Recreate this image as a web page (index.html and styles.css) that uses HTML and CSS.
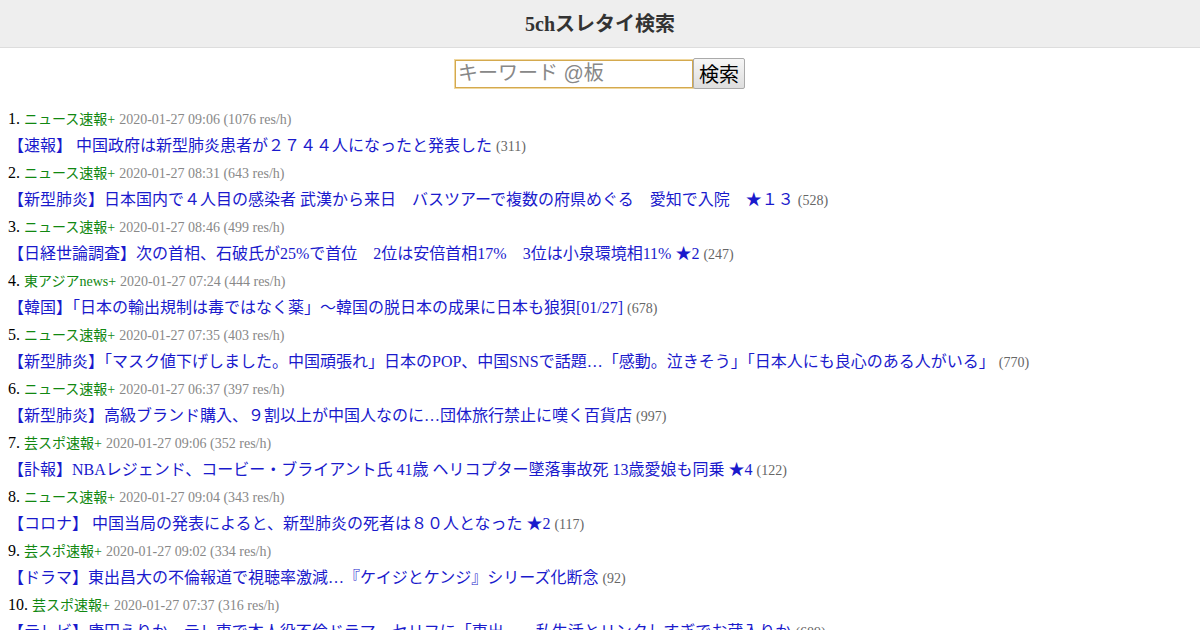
FILE: index.html
```html
<!DOCTYPE html>
<html lang="ja">
<head>
<meta charset="utf-8">
<title>5chスレタイ検索</title>
<link rel="stylesheet" href="styles.css">
</head>
<body>
<header class="header"><h1 class="site-title">5chスレタイ検索</h1></header>
<form class="search">
  <input class="search-input" type="text" placeholder="キーワード @板"><button class="search-btn" type="button">検索</button>
</form>
<div class="list">
  <div class="item">
    <div class="meta"><span class="num">1.</span> <span class="board">ニュース速報+</span> <span class="info">2020-01-27 09:06 (1076 res/h)</span></div>
    <div class="row"><a class="link" href="#">【速報】 中国政府は新型肺炎患者が２７４４人になったと発表した</a> <span class="count">(311)</span></div>
  </div>
  <div class="item">
    <div class="meta"><span class="num">2.</span> <span class="board">ニュース速報+</span> <span class="info">2020-01-27 08:31 (643 res/h)</span></div>
    <div class="row"><a class="link" href="#">【新型肺炎】日本国内で４人目の感染者 武漢から来日　バスツアーで複数の府県めぐる　愛知で入院　★１３</a> <span class="count">(528)</span></div>
  </div>
  <div class="item">
    <div class="meta"><span class="num">3.</span> <span class="board">ニュース速報+</span> <span class="info">2020-01-27 08:46 (499 res/h)</span></div>
    <div class="row"><a class="link" href="#">【日経世論調査】次の首相、石破氏が25%で首位　2位は安倍首相17%　3位は小泉環境相11% ★2</a> <span class="count">(247)</span></div>
  </div>
  <div class="item">
    <div class="meta"><span class="num">4.</span> <span class="board">東アジアnews+</span> <span class="info">2020-01-27 07:24 (444 res/h)</span></div>
    <div class="row"><a class="link" href="#">【韓国】「日本の輸出規制は毒ではなく薬」～韓国の脱日本の成果に日本も狼狽[01/27]</a> <span class="count">(678)</span></div>
  </div>
  <div class="item">
    <div class="meta"><span class="num">5.</span> <span class="board">ニュース速報+</span> <span class="info">2020-01-27 07:35 (403 res/h)</span></div>
    <div class="row"><a class="link" href="#">【新型肺炎】「マスク値下げしました。中国頑張れ」日本のPOP、中国SNSで話題…「感動。泣きそう」「日本人にも良心のある人がいる」</a> <span class="count">(770)</span></div>
  </div>
  <div class="item">
    <div class="meta"><span class="num">6.</span> <span class="board">ニュース速報+</span> <span class="info">2020-01-27 06:37 (397 res/h)</span></div>
    <div class="row"><a class="link" href="#">【新型肺炎】高級ブランド購入、９割以上が中国人なのに…団体旅行禁止に嘆く百貨店</a> <span class="count">(997)</span></div>
  </div>
  <div class="item">
    <div class="meta"><span class="num">7.</span> <span class="board">芸スポ速報+</span> <span class="info">2020-01-27 09:06 (352 res/h)</span></div>
    <div class="row"><a class="link" href="#">【訃報】NBAレジェンド、コービー・ブライアント氏 41歳 ヘリコプター墜落事故死 13歳愛娘も同乗 ★4</a> <span class="count">(122)</span></div>
  </div>
  <div class="item">
    <div class="meta"><span class="num">8.</span> <span class="board">ニュース速報+</span> <span class="info">2020-01-27 09:04 (343 res/h)</span></div>
    <div class="row"><a class="link" href="#">【コロナ】 中国当局の発表によると、新型肺炎の死者は８０人となった ★2</a> <span class="count">(117)</span></div>
  </div>
  <div class="item">
    <div class="meta"><span class="num">9.</span> <span class="board">芸スポ速報+</span> <span class="info">2020-01-27 09:02 (334 res/h)</span></div>
    <div class="row"><a class="link" href="#">【ドラマ】東出昌大の不倫報道で視聴率激減…『ケイジとケンジ』シリーズ化断念</a> <span class="count">(92)</span></div>
  </div>
  <div class="item">
    <div class="meta"><span class="num">10.</span> <span class="board">芸スポ速報+</span> <span class="info">2020-01-27 07:37 (316 res/h)</span></div>
    <div class="row"><a class="link" href="#">【テレビ】唐田えりか、テレ東で本人役不倫ドラマ…セリフに「東出……私生活とリンクしすぎでお蔵入りか</a> <span class="count">(689)</span></div>
  </div>
</div>
</body>
</html>
```

FILE: styles.css
```css
html, body {
  margin: 0;
  padding: 0;
  background: #fff;
}
body {
  font-family: "Liberation Serif", "Noto Sans CJK JP", serif;
  color: #000;
}
.header {
  height: 47px;
  background: #eeeeee;
  border-bottom: 1px solid #dddddd;
  display: flex;
  align-items: center;
  justify-content: center;
}
.site-title {
  margin: 0;
  font-size: 20px;
  font-weight: bold;
  color: #333;
  line-height: 1;
}
.search {
  display: flex;
  justify-content: center;
  align-items: center;
  margin-top: 10px;
  height: 31px;
}
.search-input {
  box-sizing: border-box;
  width: 238px;
  height: 28px;
  font-size: 20px;
  font-family: "Liberation Sans", "Noto Sans CJK JP", sans-serif;
  border: 1px solid #d4a94e;
  outline: 1px solid #f0d8a0;
  padding: 0 2px;
  margin: 0;
  color: #000;
}
.search-input::placeholder {
  color: #888;
}
.search-btn {
  box-sizing: border-box;
  height: 31px;
  width: 52px;
  font-size: 20px;
  font-family: "Noto Sans CJK JP", sans-serif;
  border: 1px solid #aaa;
  border-radius: 2px;
  background: linear-gradient(#f6f6f6, #dedede);
  padding: 0;
  margin: 0;
  color: #000;
  line-height: 1;
}
.list {
  margin-top: 16px;
  padding: 0 8px;
}
.meta, .row {
  height: 27px;
  line-height: 27px;
  white-space: nowrap;
}
.num {
  font-size: 16px;
}
.board {
  font-size: 14px;
  color: #118811;
}
.info, .count {
  font-size: 14px;
  color: #888;
}
.count {
  color: #666;
}
.link {
  font-size: 16px;
  color: #1a1acc;
  text-decoration: none;
}
```
